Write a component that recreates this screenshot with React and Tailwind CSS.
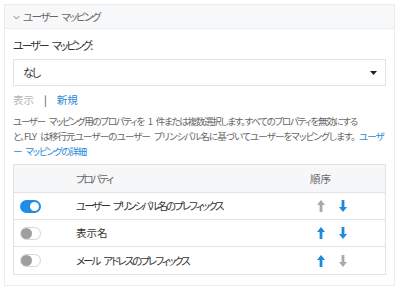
import React from "react";

const font = { fontFamily: '"Noto Sans CJK JP", "Noto Sans", sans-serif' };

function Arrow({ dir, active }) {
  const color = active ? "#1f8ad8" : "#a9a9a9";
  const pts =
    dir === "up"
      ? "4,0 8,5 5.4,5 5.4,12 2.6,12 2.6,5 0,5"
      : "4,12 8,7 5.4,7 5.4,0 2.6,0 2.6,7 0,7";
  return (
    <svg width="8" height="12" viewBox="0 0 8 12">
      <polygon points={pts} fill={color} />
    </svg>
  );
}

function Toggle({ on }) {
  if (on) {
    return (
      <div className="w-[21px] h-[13px] rounded-full bg-[#1f8ce6] flex items-center justify-end pr-[2px]">
        <div className="w-[9px] h-[9px] rounded-full bg-white" />
      </div>
    );
  }
  return (
    <div className="w-[21px] h-[13px] rounded-full bg-white border border-[#d4d4d4] flex items-center">
      <div className="w-[11px] h-[11px] rounded-full bg-[#9e9e9e]" />
    </div>
  );
}

function S({ w = "w-[4px]" }) {
  return <span className={`inline-block ${w}`} />;
}

const rows = [
  { on: true, name: ["ユーザー", "プリンシパル名のプレフィックス"], up: false, down: true },
  { on: false, name: ["表示名"], up: true, down: true },
  { on: false, name: ["メール", "アドレスのプレフィックス"], up: true, down: false },
];

export default function App() {
  return (
    <div
      className="w-[404px] h-[294px] bg-white pt-[4px] pl-[4px] [font-feature-settings:'palt']"
      style={font}
    >
      <div className="w-[391px] h-[282px] border border-[#ececec] flex flex-col">
        <div className="h-[24px] bg-[#f7f8f9] border-b border-[#ececec] flex items-center pl-[8px] text-[10.5px] text-[#666]">
          <svg width="7" height="5" viewBox="0 0 7 5" className="mr-[3px] mt-[1px]">
            <polyline points="0.5,0.8 3.5,4 6.5,0.8" fill="none" stroke="#888" strokeWidth="1" />
          </svg>
          <span className="tracking-[-1.6px]">
            ユーザー<S />マッピング
          </span>
        </div>
        <div className="pl-[8px] pr-[8px] pt-[8px] flex flex-col">
          <div className="text-[11px] text-[#333] leading-[16px] tracking-[-2px]">
            ユーザー<S />マッピング:
          </div>
          <div className="mt-[6px] h-[27px] border border-[#e3e3e3] flex items-center justify-between pl-[9px] pr-[8px] text-[11px] text-[#333]">
            <span className="tracking-[-2px]">なし</span>
            <svg width="7" height="4" viewBox="0 0 7 4">
              <polygon points="0,0 7,0 3.5,4" fill="#222" />
            </svg>
          </div>
          <div className="mt-[6px] h-[16px] flex items-center text-[10.5px]">
            <span className="text-[#b5b5b5]">表示</span>
            <span className="text-[#444] ml-[10px]">|</span>
            <span className="text-[#1f8ad8] ml-[10px]">新規</span>
          </div>
          <div className="mt-[6px] text-[9.5px] leading-[15px] text-[#666] whitespace-nowrap">
            <div className="tracking-[-1.28px]">
              ユーザー<S />マッピング用のプロパティを<S />1<S />件または複数選択します。すべてのプロパティを無効にする
            </div>
            <div className="tracking-[-0.85px]">
              と、FLY<S />は移行元ユーザーのユーザー<S />プリンシパル名に基づいてユーザーをマッピングします。<S />
              <span className="text-[#1f8ad8]">ユーザ</span>
            </div>
            <div className="text-[#1f8ad8] tracking-[-1.15px]">
              ー<S />マッピングの詳細
            </div>
          </div>
          <div className="mt-[5px] border border-[#e3e3e3] flex flex-col text-[10.5px] text-[#333]">
            <div className="h-[28px] bg-[#f6f7f8] flex items-center border-b border-[#e3e3e3] text-[#666]">
              <div className="w-[62px]" />
              <div className="flex-1 tracking-[-2.2px]">プロパティ</div>
              <div className="w-[75px]">順序</div>
            </div>
            {rows.map((r, i) => (
              <div
                key={i}
                className={`h-[27px] flex items-center ${i < rows.length - 1 ? "border-b border-[#e3e3e3]" : ""}`}
              >
                <div className="w-[62px] pl-[6px]">
                  <Toggle on={r.on} />
                </div>
                <div className={`flex-1 ${r.name.length > 1 ? "tracking-[-2px]" : ""}`}>
                  {r.name[0]}
                  {r.name.length > 1 && (
                    <>
                      <S />
                      {r.name[1]}
                    </>
                  )}
                </div>
                <div className="w-[75px] flex items-center pl-[7px] gap-[14px]">
                  <Arrow dir="up" active={r.up} />
                  <Arrow dir="down" active={r.down} />
                </div>
              </div>
            ))}
          </div>
        </div>
      </div>
    </div>
  );
}
